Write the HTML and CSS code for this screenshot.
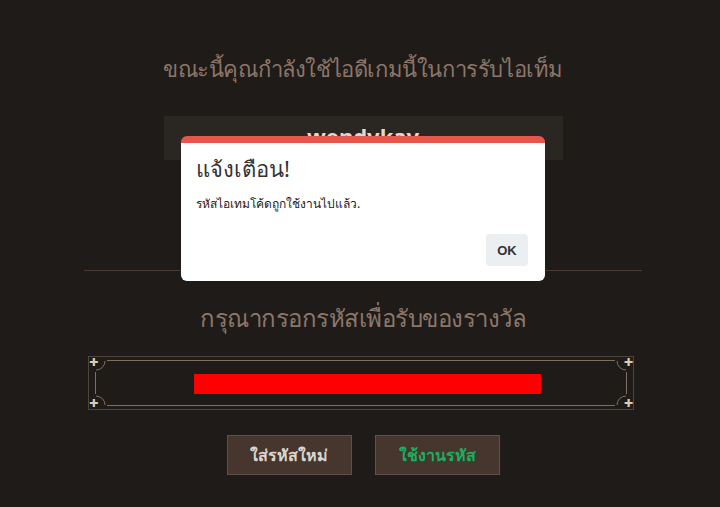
FILE: index.html
```html
<!DOCTYPE html>
<html lang="th">
<head>
    <meta charset="UTF-8">
    <meta name="viewport" content="width=device-width, initial-scale=1.0">
    <title>รับไอเท็ม</title>
    <link rel="stylesheet" href="styles.css">
</head>
<body>
    <div class="container">
        <h2 class="title title-id">ขณะนี้คุณกำลังใช้ไอดีเกมนี้ในการรับไอเท็ม</h2>
        <div class="account-box">wendykay</div>

        <div class="divider"></div>

        <h2 class="title title-code">กรุณากรอกรหัสเพื่อรับของรางวัล</h2>

        <!-- Code input frame -->
        <div class="code-frame">
            <div class="code-inner">
                <span class="code-text">ABCD-EFGH-IJKL-MNOP-QRST</span>
                <span class="redact"></span>
            </div>
            <span class="corner tl"><svg viewBox="0 0 12 12"><path d="M1 10 A9 9 0 0 0 10 1" /></svg></span>
            <span class="corner tr"><svg viewBox="0 0 12 12"><path d="M2 1 A9 9 0 0 0 11 10" /></svg></span>
            <span class="corner bl"><svg viewBox="0 0 12 12"><path d="M1 2 A9 9 0 0 1 10 11" /></svg></span>
            <span class="corner br"><svg viewBox="0 0 12 12"><path d="M11 2 A9 9 0 0 0 2 11" /></svg></span>
            <span class="plus p-tl">✚</span>
            <span class="plus p-tr">✚</span>
            <span class="plus p-bl">✚</span>
            <span class="plus p-br">✚</span>
        </div>

        <div class="actions">
            <button class="btn">ใส่รหัสใหม่</button>
            <button class="btn btn-use">ใช้งานรหัส</button>
        </div>
    </div>

    <!-- Alert popup -->
    <div class="alert">
        <h3>แจ้งเตือน!</h3>
        <p>รหัสไอเทมโค้ดถูกใช้งานไปแล้ว.</p>
        <div class="alert-actions">
            <button class="ok-btn">OK</button>
        </div>
    </div>
</body>
</html>
```

FILE: styles.css
```css
/* General Styles */
body {
    margin: 0;
    padding: 0;
    background-color: #1f1b18;
    font-family: 'Noto Sans', 'Liberation Sans', sans-serif;
}

.container {
    width: 558px;
    margin-left: 84px;
    padding-top: 48px;
    display: flex;
    flex-direction: column;
    align-items: center;
}

.title {
    margin: 0;
    font-size: 24px;
    font-weight: normal;
    line-height: 40px;
    color: #8c766a;
    letter-spacing: -0.5px;
}

.title-id {
    font-size: 22px;
    letter-spacing: -0.4px;
}

.account-box {
    margin-top: 28px;
    width: 399px;
    height: 44px;
    background-color: #2a2622;
    color: #e2d8cd;
    font-size: 22px;
    font-weight: bold;
    text-align: center;
    line-height: 40px;
}

.divider {
    width: 100%;
    height: 1px;
    background-color: #4a3a32;
    margin-top: 110px;
}

.title-code {
    margin-top: 27px;
}

/* Code frame */
.code-frame {
    position: relative;
    margin-top: 18px;
    width: 544px;
    height: 52px;
    border: 1px solid #4d4539;
    margin-left: -4px;
}

.code-inner {
    position: absolute;
    top: 3px;
    bottom: 3px;
    left: 6px;
    right: 6px;
    border: 1px solid #7d705d;
    display: flex;
    align-items: center;
    justify-content: center;
}

.code-text {
    color: #d9d0c4;
    font-size: 18px;
    font-weight: bold;
    letter-spacing: 2px;
}

.redact {
    position: absolute;
    left: 98px;
    top: 13px;
    width: 347px;
    height: 20px;
    background-color: #ff0000;
}

.corner {
    position: absolute;
    width: 12px;
    height: 12px;
    background-color: #1f1b18;
}
.corner svg {
    display: block;
    width: 12px;
    height: 12px;
}
.corner path {
    fill: none;
    stroke: #7d705d;
    stroke-width: 1;
}
.corner.tl { top: 3px; left: 6px; }
.corner.tr { top: 3px; right: 6px; }
.corner.bl { bottom: 3px; left: 6px; }
.corner.br { bottom: 3px; right: 6px; }

.plus {
    position: absolute;
    color: #d8ccb3;
    font-size: 11px;
    line-height: 11px;
    font-family: 'DejaVu Sans', sans-serif;
}
.p-tl { top: 0; left: 0; }
.p-tr { top: 0; right: 0; }
.p-bl { bottom: 0; left: 0; }
.p-br { bottom: 0; right: 0; }

/* Buttons */
.actions {
    display: flex;
    gap: 23px;
    margin-top: 25px;
}

.btn {
    width: 125px;
    height: 40px;
    background-color: #46362e;
    border: 1px solid #5f514a;
    color: #ddd6d0;
    font-family: 'Noto Sans', 'Liberation Sans', sans-serif;
    font-size: 16px;
    font-weight: 600;
    padding: 0;
}

.btn-use {
    color: #1dad5f;
}

/* Alert popup */
.alert {
    position: fixed;
    top: 136px;
    left: 181px;
    width: 364px;
    height: 145px;
    box-sizing: border-box;
    background-color: #fff;
    border-top: 7px solid #e8554a;
    border-radius: 6px;
    padding: 0 17px 0 15px;
}

.alert h3 {
    margin: 9px 0 0;
    font-size: 22px;
    font-weight: normal;
    color: #333;
    line-height: 32px;
}

.alert p {
    margin: 12px 0 0;
    font-size: 12px;
    color: #222;
    line-height: 16px;
}

.alert-actions {
    display: flex;
    justify-content: flex-end;
    margin-top: 22px;
}

.ok-btn {
    width: 42px;
    height: 32px;
    border: none;
    border-radius: 4px;
    background-color: #eceff1;
    color: #333;
    font-family: 'Liberation Sans', sans-serif;
    font-size: 13px;
    font-weight: bold;
    padding: 0;
}
```
